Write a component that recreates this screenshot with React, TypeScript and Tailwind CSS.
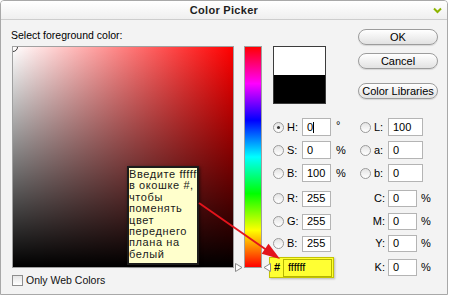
import React from 'react';

const font = "font-['Liberation_Sans',Arial,sans-serif]";

const Radio = ({ checked }: { checked?: boolean }) => (
  <span className="w-[11px] h-[11px] shrink-0 rounded-full border border-[#9a9a9a] bg-[linear-gradient(to_bottom,#e4e4e4,#ffffff)] flex items-center justify-center">
    {checked && <span className="w-[3px] h-[3px] rounded-full bg-[#333]" />}
  </span>
);

const Field = ({ value, w, h, caret }: { value: string; w: string; h: string; caret?: boolean }) => (
  <div className={`${w} ${h} shrink-0 bg-white border border-[#b4b4b4] flex items-center pl-[4px] text-[11px] text-black`}>
    {value}
    {caret && <span className="w-[1px] h-[11px] bg-black" />}
  </div>
);

interface LeftItemProps {
  label: string;
  value: string;
  unit?: string;
  checked?: boolean;
  caret?: boolean;
  h: string;
}

// radio + label + input + unit, left column (HSB / RGB)
const LeftItem = ({ label, value, unit, checked, caret, h }: LeftItemProps) => (
  <div className="w-[87px] flex items-center">
    <Radio checked={checked} />
    <span className="ml-[3px] w-[15px] text-[11px]">{label}</span>
    <Field value={value} w="w-[29px]" h={h} caret={caret} />
    {unit && (
      <span className={`ml-[5px] text-[11px] ${unit === '°' ? 'self-start -mt-[1px]' : ''}`}>{unit}</span>
    )}
  </div>
);

const LabItem = ({ label, value, h }: { label: string; value: string; h: string }) => (
  <div className="flex items-center">
    <Radio />
    <span className="ml-[3px] w-[14px] text-[11px]">{label}</span>
    <Field value={value} w="w-[35px]" h={h} />
  </div>
);

const CmykItem = ({ label, value, h }: { label: string; value: string; h: string }) => (
  <div className="flex items-center">
    <span className="w-[28px] pr-[3px] text-right text-[11px]">{label}</span>
    <Field value={value} w="w-[29px]" h={h} />
    <span className="ml-[4px] text-[11px]">%</span>
  </div>
);

const PillButton = ({ children, className = '' }: { children: React.ReactNode; className?: string }) => (
  <div
    className={`h-[16px] rounded-full border border-[#9c9c9c] bg-[linear-gradient(to_bottom,#ffffff,#e2e2e2)] shadow-[0_1px_1px_rgba(0,0,0,0.12)] flex items-center justify-center text-[11px] text-black ${className}`}
  >
    {children}
  </div>
);

const tooltipLines = ['Введите ffffff', 'в окошке #,', 'чтобы', 'поменять', 'цвет', 'переднего', 'плана на', 'белый'];

export default function App() {
  return (
    <div className={`relative w-[450px] h-[297px] bg-white text-black ${font}`}>
      <div className="w-[448px] h-[295px] border border-[#a8a8a8] rounded-t-[4px] bg-[#f3f3f3] flex flex-col overflow-hidden">
        {/* title bar */}
        <div className="relative h-[19px] shrink-0 border-b border-[#cdcdcd] bg-[linear-gradient(to_bottom,#ffffff,#efefef)] flex items-center justify-center">
          <span className="text-[11px] font-bold tracking-[0.3px] text-[#1e1e1e]">Color Picker</span>
          <svg className="absolute right-[5px] top-[6px]" width="9" height="7" viewBox="0 0 9 7">
            <path d="M1 1.5 L4.5 5 L8 1.5" fill="none" stroke="#8db400" strokeWidth="2" />
          </svg>
        </div>

        {/* body */}
        <div className="flex pl-[11px] pt-[9px]">
          {/* colour field column */}
          <div className="w-[222px] flex flex-col">
            <div className="h-[13px] leading-[13px] text-[10.5px] -ml-[1px]">Select foreground color:</div>
            <div className="relative mt-[4px] w-[222px] h-[222px] border border-[#a0a0a0] overflow-hidden bg-[linear-gradient(to_bottom,rgba(0,0,0,0),#000),linear-gradient(to_right,#fff,#f00)]">
              <span className="absolute -left-[5px] -top-[5px] w-[10px] h-[10px] rounded-full border border-[#3a3a3a]" />
            </div>
            <div className="mt-[7px] flex items-center h-[11px]">
              <span className="w-[11px] h-[11px] border border-[#8e8e8e] bg-[linear-gradient(to_bottom,#e6e6e6,#ffffff)]" />
              <span className="ml-[3px] text-[10.5px] text-[#111]">Only Web Colors</span>
            </div>
          </div>

          {/* hue slider */}
          <div className="relative ml-[10px] mt-[17px] w-[18px] h-[222px] border border-[#a0a0a0] bg-[linear-gradient(to_bottom,#f00,#f0f,#00f,#0ff,#0f0,#ff0,#f00)]">
            <svg className="absolute -left-[10px] top-[216px]" width="8" height="9" viewBox="0 0 8 9">
              <path d="M0.5 0.5 L7 4.5 L0.5 8.5 Z" fill="#fff" stroke="#8a8a8a" />
            </svg>
            <svg className="absolute left-[18px] top-[216px]" width="8" height="9" viewBox="0 0 8 9">
              <path d="M7.5 0.5 L1 4.5 L7.5 8.5 Z" fill="#fff" stroke="#8a8a8a" />
            </svg>
          </div>

          {/* right side */}
          <div className="ml-[11px] w-[165px] flex flex-col">
            <div className="flex">
              <div className="mt-[17px] w-[53px] h-[58px] border border-[#3c3c3c] flex flex-col">
                <div className="flex-1 bg-white" />
                <div className="flex-1 bg-black" />
              </div>
              <div className="ml-auto w-[80px] flex flex-col">
                <PillButton>OK</PillButton>
                <PillButton className="mt-[8px]">Cancel</PillButton>
                <PillButton className="mt-[14px]">Color Libraries</PillButton>
              </div>
            </div>

            <div className="mt-[14px] flex flex-col">
              <div className="flex h-[18px] items-center">
                <LeftItem label="H:" value="0" unit="°" checked caret h="h-[18px]" />
                <LabItem label="L:" value="100" h="h-[18px]" />
              </div>
              <div className="mt-[5px] flex h-[18px] items-center">
                <LeftItem label="S:" value="0" unit="%" h="h-[18px]" />
                <LabItem label="a:" value="0" h="h-[18px]" />
              </div>
              <div className="mt-[5px] flex h-[18px] items-center">
                <LeftItem label="B:" value="100" unit="%" h="h-[18px]" />
                <LabItem label="b:" value="0" h="h-[18px]" />
              </div>
              <div className="mt-[8px] flex h-[17px] items-center">
                <LeftItem label="R:" value="255" h="h-[16px]" />
                <CmykItem label="C:" value="0" h="h-[17px]" />
              </div>
              <div className="mt-[6px] flex h-[17px] items-center">
                <LeftItem label="G:" value="255" h="h-[16px]" />
                <CmykItem label="M:" value="0" h="h-[17px]" />
              </div>
              <div className="mt-[5px] flex h-[17px] items-center">
                <LeftItem label="B:" value="255" h="h-[16px]" />
                <CmykItem label="Y:" value="0" h="h-[17px]" />
              </div>
              <div className="mt-[5px] flex h-[21px] items-center">
                <div className="w-[87px] flex">
                  <div className="-ml-[4px] w-[65px] h-[21px] border border-[#c4c400] bg-[#ffff33] shadow-[1px_1px_2px_rgba(0,0,0,0.25)] flex items-center">
                    <span className="ml-[4px] w-[9px] text-[11px] font-bold">#</span>
                    <div className="h-[18px] w-[49px] border border-[#b5b500] bg-[#ffff33] flex items-center pl-[4px] text-[11px]">
                      ffffff
                    </div>
                  </div>
                </div>
                <CmykItem label="K:" value="0" h="h-[17px]" />
              </div>
            </div>
          </div>
        </div>
      </div>

      {/* tooltip note */}
      <div className="absolute left-[127px] top-[166px] w-[72px] h-[99px] border-2 border-[#1c1c1c] bg-[#ffffcc] shadow-[1px_1px_3px_rgba(0,0,0,0.55)] overflow-hidden pt-[1px]">
        {tooltipLines.map((line) => (
          <div key={line} className="whitespace-nowrap text-[11px] leading-[11.4px] tracking-[0.6px] text-[#1a1a1a]">
            {line}
          </div>
        ))}
      </div>

      {/* red arrow */}
      <svg className="absolute left-0 top-0 pointer-events-none" width="450" height="297" viewBox="0 0 450 297">
        <line x1="199" y1="203" x2="268" y2="251" stroke="#e3141c" strokeWidth="2" />
        <path d="M280 259 L261.7 253.7 L268.5 243.8 Z" fill="#e3141c" />
      </svg>
    </div>
  );
}
